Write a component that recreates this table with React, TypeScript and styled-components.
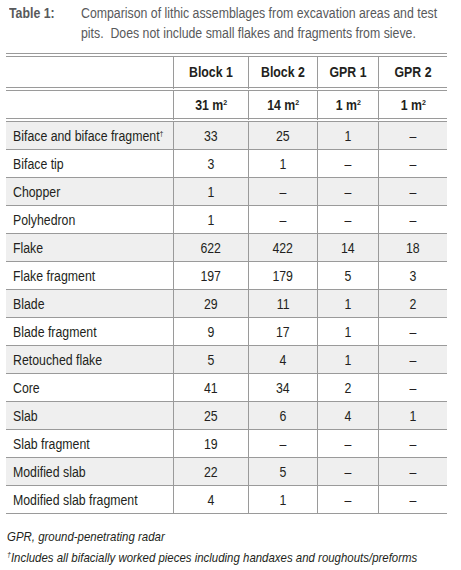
import React from 'react';
import styled, { createGlobalStyle } from 'styled-components';

const SQUEEZE = 0.88;

const GlobalStyle = createGlobalStyle`
	html, body {
		margin: 0;
		padding: 0;
		background: #ffffff;
	}
	body {
		font-family: "Liberation Sans Narrow", "Liberation Sans", Arial, sans-serif;
		color: #231f20;
	}
`;

const Page = styled.div`
	width: 461px;
	height: 570px;
	box-sizing: border-box;
	padding-top: 3px;
	overflow: hidden;
`;

// the source uses a condensed face; squeeze the regular one to match
const Narrow = styled.span<{ $origin?: string }>`
	display: inline-block;
	transform: scaleX(${SQUEEZE});
	transform-origin: ${(p) => p.$origin || 'center'};
	white-space: nowrap;
`;

const Caption = styled.div`
	display: flex;
	padding-left: 9px;
	font-size: 14px;
	line-height: 20px;
	color: #58595b;
`;

const CaptionLabel = styled.div`
	flex: 0 0 72px;
	font-weight: bold;
`;

const CaptionText = styled.div`
	flex: 0 0 ${Math.round(366 / SQUEEZE)}px;
	transform: scaleX(${SQUEEZE});
	transform-origin: left top;
`;

const Table = styled.table`
	margin: 10px 0 0 6px;
	width: 441px;
	table-layout: fixed;
	border-collapse: separate;
	border-spacing: 0;
	border-top: 4px double #9a9a9a;
	font-size: 14px;
`;

const Cell = styled.td<{ $shaded?: boolean; $head?: boolean; $label?: boolean; $tall?: boolean }>`
	height: ${(p) => (p.$tall ? '30px' : '27px')};
	padding: 0 ${(p) => (p.$label ? '7px' : '0')};
	text-align: ${(p) => (p.$label ? 'left' : 'center')};
	font-weight: ${(p) => (p.$head ? 'bold' : 'normal')};
	background: ${(p) => (p.$shaded ? '#efefef' : '#ffffff')};
	border-bottom: ${(p) => (p.$head ? '4px double #9a9a9a' : '1px solid #9a9a9a')};
	border-left: ${(p) => (p.$label ? 'none' : '1px solid #9a9a9a')};
	white-space: nowrap;
	vertical-align: middle;
`;

const Notes = styled.div`
	margin: 12px 0 0 7px;
	font-size: 13px;
	font-style: italic;
	line-height: 21px;
	color: #231f20;
`;

const NoteLine = styled.div`
	transform: scaleX(${SQUEEZE});
	transform-origin: left center;
	white-space: nowrap;
`;

const Sup = styled.sup`
	font-size: 8px;
	vertical-align: 5px;
	line-height: 0;
`;

const headers = ['Block 1', 'Block 2', 'GPR 1', 'GPR 2'];
const areas = ['31', '14', '1', '1'];

const rows: [string, string[]][] = [
	['Biface and biface fragment', ['33', '25', '1', '–']],
	['Biface tip', ['3', '1', '–', '–']],
	['Chopper', ['1', '–', '–', '–']],
	['Polyhedron', ['1', '–', '–', '–']],
	['Flake', ['622', '422', '14', '18']],
	['Flake fragment', ['197', '179', '5', '3']],
	['Blade', ['29', '11', '1', '2']],
	['Blade fragment', ['9', '17', '1', '–']],
	['Retouched flake', ['5', '4', '1', '–']],
	['Core', ['41', '34', '2', '–']],
	['Slab', ['25', '6', '4', '1']],
	['Slab fragment', ['19', '–', '–', '–']],
	['Modified slab', ['22', '5', '–', '–']],
	['Modified slab fragment', ['4', '1', '–', '–']],
];

export default function App() {
	return (
		<Page>
			<GlobalStyle />
			<Caption>
				<CaptionLabel>
					<Narrow $origin="left">Table 1:</Narrow>
				</CaptionLabel>
				<CaptionText>
					Comparison of lithic assemblages from excavation areas and test pits.&nbsp; Does not include small flakes and fragments from sieve.
				</CaptionText>
			</Caption>
			<Table>
				<colgroup>
					<col style={{ width: 167 }} />
					<col style={{ width: 75 }} />
					<col style={{ width: 69 }} />
					<col style={{ width: 61 }} />
					<col style={{ width: 69 }} />
				</colgroup>
				<thead>
					<tr>
						<Cell $label $head $tall />
						{headers.map((h) => (
							<Cell key={h} $head $tall>
								<Narrow>{h}</Narrow>
							</Cell>
						))}
					</tr>
					<tr>
						<Cell $label $head />
						{areas.map((a, i) => (
							<Cell key={i} $head>
								<Narrow>{a} m<Sup>2</Sup></Narrow>
							</Cell>
						))}
					</tr>
				</thead>
				<tbody>
					{rows.map(([label, values], r) => (
						<tr key={label}>
							<Cell $label $shaded={r % 2 === 0}>
								<Narrow $origin="left">
									{label}
									{r === 0 && <Sup>†</Sup>}
								</Narrow>
							</Cell>
							{values.map((v, i) => (
								<Cell key={i} $shaded={r % 2 === 0}>
									<Narrow>{v}</Narrow>
								</Cell>
							))}
						</tr>
					))}
				</tbody>
			</Table>
			<Notes>
				<NoteLine>GPR, ground-penetrating radar</NoteLine>
				<NoteLine><Sup>†</Sup>Includes all bifacially worked pieces including handaxes and roughouts/preforms</NoteLine>
			</Notes>
		</Page>
	);
}
